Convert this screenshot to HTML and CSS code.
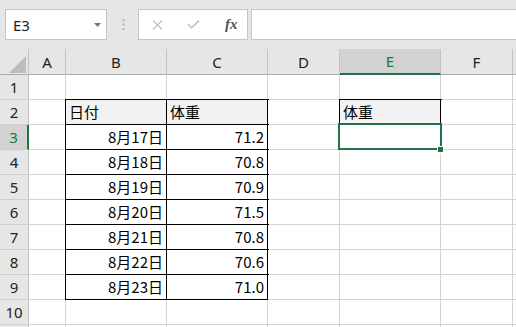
FILE: index.html
```html
<!DOCTYPE html>
<html lang="ja">
<head>
  <meta charset="UTF-8">
  <title>体重 - Excel</title>
  <link rel="stylesheet" href="styles.css">
</head>
<body>
  <!-- name box + formula bar -->
  <div class="toolbar">
    <div class="namebox">
      <span>E3</span>
      <svg class="caret" width="7" height="4" viewBox="0 0 7 4"><path d="M0 0 H7 L3.5 4 Z" fill="#777"/></svg>
    </div>
    <svg class="grip" width="3" height="11" viewBox="0 0 3 11">
      <rect x="0.5" y="0" width="2" height="2" fill="#b4b4b4"/>
      <rect x="0.5" y="4.5" width="2" height="2" fill="#b4b4b4"/>
      <rect x="0.5" y="9" width="2" height="2" fill="#b4b4b4"/>
    </svg>
    <div class="fbtns">
      <svg width="11" height="10" viewBox="0 0 11 10"><path d="M1 0.5 L10 9.5 M10 0.5 L1 9.5" stroke="#c4c4c4" stroke-width="1.3" fill="none"/></svg>
      <svg class="ok" width="13" height="9" viewBox="0 0 13 9"><path d="M1 4.3 L4.6 7.8 L12 0.6" stroke="#c4c4c4" stroke-width="1.6" fill="none"/></svg>
      <span class="fx">fx</span>
    </div>
    <div class="fbar"></div>
  </div>

  <!-- worksheet -->
  <div class="sheet">
    <div class="ch corner"></div><div class="ch">A</div><div class="ch">B</div><div class="ch">C</div><div class="ch">D</div><div class="ch sel-col">E</div><div class="ch">F</div><div class="ch"></div>

    <div class="rh">1</div><div class="c"></div><div class="c"></div><div class="c"></div><div class="c"></div><div class="c"></div><div class="c"></div><div class="c"></div>

    <div class="rh">2</div><div class="c"></div><div class="c t hd">日付</div><div class="c t hd">体重</div><div class="c"></div><div class="c t hd">体重</div><div class="c"></div><div class="c"></div>

    <div class="rh sel-row">3</div><div class="c"></div><div class="c t num">8月17日</div><div class="c t num">71.2</div><div class="c"></div><div class="c active"></div><div class="c"></div><div class="c"></div>

    <div class="rh">4</div><div class="c"></div><div class="c t num">8月18日</div><div class="c t num">70.8</div><div class="c"></div><div class="c"></div><div class="c"></div><div class="c"></div>

    <div class="rh">5</div><div class="c"></div><div class="c t num">8月19日</div><div class="c t num">70.9</div><div class="c"></div><div class="c"></div><div class="c"></div><div class="c"></div>

    <div class="rh">6</div><div class="c"></div><div class="c t num">8月20日</div><div class="c t num">71.5</div><div class="c"></div><div class="c"></div><div class="c"></div><div class="c"></div>

    <div class="rh">7</div><div class="c"></div><div class="c t num">8月21日</div><div class="c t num">70.8</div><div class="c"></div><div class="c"></div><div class="c"></div><div class="c"></div>

    <div class="rh">8</div><div class="c"></div><div class="c t num">8月22日</div><div class="c t num">70.6</div><div class="c"></div><div class="c"></div><div class="c"></div><div class="c"></div>

    <div class="rh">9</div><div class="c"></div><div class="c t num">8月23日</div><div class="c t num">71.0</div><div class="c"></div><div class="c"></div><div class="c"></div><div class="c"></div>

    <div class="rh">10</div><div class="c"></div><div class="c"></div><div class="c"></div><div class="c"></div><div class="c"></div><div class="c"></div><div class="c"></div>

    <div class="rh"></div><div class="c"></div><div class="c"></div><div class="c"></div><div class="c"></div><div class="c"></div><div class="c"></div><div class="c"></div>
  </div>
</body>
</html>
```

FILE: styles.css
```css
html, body {
  height: 100%;
}

body {
  margin: 0;
  overflow: hidden;
  background: #fff;
  font-family: "Noto Sans", sans-serif;
}

/* top bar */
.toolbar {
  display: flex;
  align-items: flex-start;
  height: 49px;
  box-sizing: border-box;
  padding: 9px 0 0 5px;
  background: #e6e6e6;
}

.toolbar > * {
  flex: none;
}

.namebox {
  width: 102px;
  height: 31px;
  box-sizing: border-box;
  border: 1px solid #c6c6c6;
  background: #fff;
  display: flex;
  align-items: center;
  justify-content: space-between;
  padding: 0 5px 0 7px;
  font-size: 15px;
  color: #222;
}

.grip {
  margin: 10px 0 0 15px;
}

.fbtns {
  width: 110px;
  height: 31px;
  box-sizing: border-box;
  margin-left: 13px;
  border: 1px solid #c6c6c6;
  background: #fff;
  display: flex;
  align-items: center;
  padding-left: 13px;
}

.fbtns .ok {
  margin-left: 24px;
}

.fx {
  margin-left: 25px;
  font-family: "Liberation Serif", serif;
  font-style: italic;
  font-weight: bold;
  font-size: 15px;
  color: #555;
  padding-bottom: 1px;
}

.fbar {
  width: 320px;
  height: 31px;
  box-sizing: border-box;
  margin-left: 3px;
  border: 1px solid #c6c6c6;
  background: #fff;
}

/* grid */
.sheet {
  display: grid;
  grid-template-columns: 29px 37px 101px 101px 72px 101px 72px 72px;
  grid-template-rows: 26px;
  grid-auto-rows: 25px;
}

.sheet > div {
  box-sizing: border-box;
  display: flex;
  align-items: center;
}

.ch {
  background: #e6e6e6;
  border-right: 1px solid #c2c2c2;
  border-bottom: 1px solid #ababab;
  justify-content: center;
  font-size: 15px;
  color: #222;
}

.corner {
  justify-content: flex-end;
  align-items: flex-end !important;
  padding: 0 2px 1px 0;
}

.corner::after {
  content: "";
  width: 0;
  height: 0;
  border-left: 17px solid transparent;
  border-bottom: 17px solid #bdbdbd;
}

.rh {
  background: #e6e6e6;
  border-right: 1px solid #c2c2c2;
  border-bottom: 1px solid #cdcdcd;
  justify-content: center;
  font-size: 15px;
  color: #222;
}

.sel-col {
  background: #d2d2d2;
  color: #217346;
  border-bottom: 2px solid #217346;
}

.sel-row {
  background: #d2d2d2;
  color: #217346;
  border-right: 2px solid #217346;
}

.c {
  background: #fff;
  border-right: 1px solid #d4d4d4;
  border-bottom: 1px solid #d4d4d4;
  padding: 0 3px 2px 3px;
  font-family: "Noto Sans CJK JP", sans-serif;
  font-size: 15px;
  color: #000;
}

.num {
  justify-content: flex-end;
}

/* black table border */
.t {
  border-right-color: #000;
  border-bottom-color: #000;
  box-shadow: 0 0 0 1px #000;
}

.hd {
  background: #f2f2f2;
}

/* selected cell */
.active {
  position: relative;
}

.active::after {
  content: "";
  position: absolute;
  left: -2px;
  top: -2px;
  width: 104px;
  height: 27px;
  box-sizing: border-box;
  border: 2px solid #217346;
}

.active::before {
  content: "";
  position: absolute;
  left: 97px;
  top: 21px;
  width: 7px;
  height: 7px;
  box-sizing: border-box;
  border: 1px solid #fff;
  background: #217346;
  z-index: 1;
}
```
